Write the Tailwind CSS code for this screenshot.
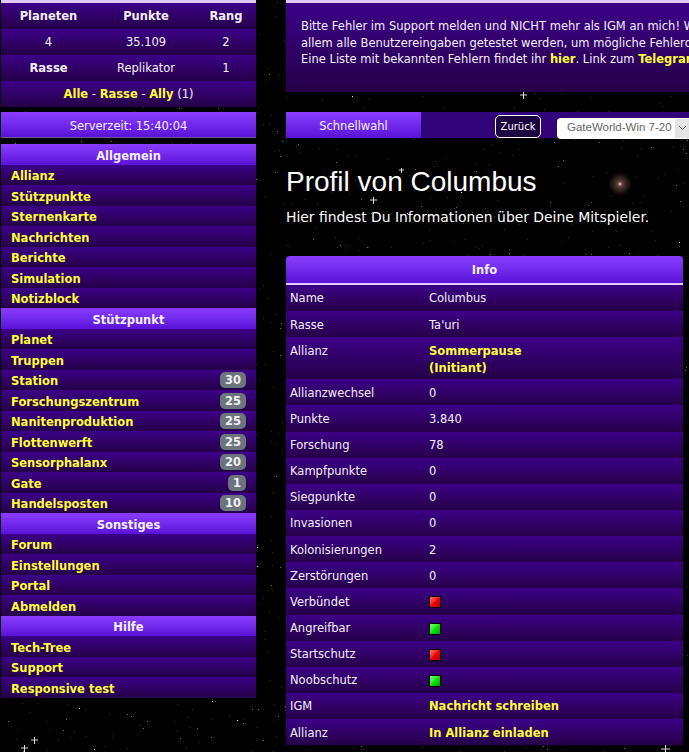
<!DOCTYPE html>
<html lang="de"><head><meta charset="utf-8"><title>Profil</title>
<script src="https://cdn.jsdelivr.net/npm/@tailwindcss/browser@4"></script>
</head>
<body class="relative h-[752px] w-[689px] overflow-hidden bg-black font-['DejaVu_Sans',sans-serif] text-[11.5px] text-[#f2f0f8]">
<svg id="stars" class="absolute inset-0" width="689" height="752" aria-hidden="true">
<defs><radialGradient id="neb"><stop offset="0" stop-color="#ffe8d8"/><stop offset=".2" stop-color="#8a6050" stop-opacity=".7"/><stop offset=".7" stop-color="#4a3028" stop-opacity=".45"/><stop offset="1" stop-color="#302020" stop-opacity="0"/></radialGradient></defs>
<circle cx="620" cy="184" r="12" fill="url(#neb)"/>
<path d="M520 95h7M523.500 92v7M370 200h7M373.500 197v7M399 170h5M401.500 168v5M31 740h7M34.500 737v7M21 748h7M24.500 745v7M661 749h9M665.500 745v7" stroke="#fff" stroke-width="1" opacity=".85"/>
</svg>
<div class="relative flex">
<aside class="ml-px w-[255px] shrink-0">
<div class="border-t-[3px] border-[#e3c8f5] [&>div]:pt-[2px]">
<div class="grid h-[26px] grid-cols-[95px_100px_60px] items-center bg-gradient-to-b from-[#3c0088] to-[#250048] text-center font-bold"><span>Planeten</span><span>Punkte</span><span>Rang</span></div>
<div class="grid h-[26px] grid-cols-[95px_100px_60px] items-center bg-gradient-to-b from-[#3c0088] to-[#250048] text-center"><span>4</span><span>35.109</span><span>2</span></div>
<div class="grid h-[26px] grid-cols-[95px_100px_60px] items-center bg-gradient-to-b from-[#3c0088] to-[#250048] text-center"><span class="font-bold">Rasse</span><span>Replikator</span><span>1</span></div>
<div class="flex h-[26px] items-center justify-center bg-gradient-to-b from-[#3c0088] to-[#250048]"><span><b class="text-[#ffff33]">Alle</b> - <b class="text-[#ffff33]">Rasse</b> - <b class="text-[#ffff33]">Ally</b> (1)</span></div>
</div>
<div class="mt-[5px] flex h-[26px] items-center justify-center border-b border-[#6a5a9a] bg-gradient-to-b from-[#8a3cff] to-[#5a10d8] pt-[4px]">Serverzeit: 15:40:04</div>
<nav class="mt-[6px] font-bold text-[#ffff33] [&>div]:flex [&>div]:h-[20.5px] [&>div]:items-center [&>div]:pt-[4px]">
<div class="justify-center bg-gradient-to-b from-[#8a3cff] to-[#5a10d8] text-[#f4f0ff]">Allgemein</div>
<div class="bg-gradient-to-b from-[#3c0088] to-[#250048] pl-[10px]">Allianz</div>
<div class="bg-gradient-to-b from-[#3c0088] to-[#250048] pl-[10px]">Stützpunkte</div>
<div class="bg-gradient-to-b from-[#3c0088] to-[#250048] pl-[10px]">Sternenkarte</div>
<div class="bg-gradient-to-b from-[#3c0088] to-[#250048] pl-[10px]">Nachrichten</div>
<div class="bg-gradient-to-b from-[#3c0088] to-[#250048] pl-[10px]">Berichte</div>
<div class="bg-gradient-to-b from-[#3c0088] to-[#250048] pl-[10px]">Simulation</div>
<div class="bg-gradient-to-b from-[#3c0088] to-[#250048] pl-[10px]">Notizblock</div>
<div class="justify-center bg-gradient-to-b from-[#8a3cff] to-[#5a10d8] text-[#f4f0ff]">Stützpunkt</div>
<div class="bg-gradient-to-b from-[#3c0088] to-[#250048] pl-[10px]">Planet</div>
<div class="bg-gradient-to-b from-[#3c0088] to-[#250048] pl-[10px]">Truppen</div>
<div class="justify-between bg-gradient-to-b from-[#3c0088] to-[#250048] pl-[10px] pr-[10px]">Station<span class="-mt-[3px] rounded-[5px] bg-[#6c757d] px-[5px] leading-[16px] text-[#f0f0f0]">30</span></div>
<div class="justify-between bg-gradient-to-b from-[#3c0088] to-[#250048] pl-[10px] pr-[10px]">Forschungszentrum<span class="-mt-[3px] rounded-[5px] bg-[#6c757d] px-[5px] leading-[16px] text-[#f0f0f0]">25</span></div>
<div class="justify-between bg-gradient-to-b from-[#3c0088] to-[#250048] pl-[10px] pr-[10px]">Nanitenproduktion<span class="-mt-[3px] rounded-[5px] bg-[#6c757d] px-[5px] leading-[16px] text-[#f0f0f0]">25</span></div>
<div class="justify-between bg-gradient-to-b from-[#3c0088] to-[#250048] pl-[10px] pr-[10px]">Flottenwerft<span class="-mt-[3px] rounded-[5px] bg-[#6c757d] px-[5px] leading-[16px] text-[#f0f0f0]">25</span></div>
<div class="justify-between bg-gradient-to-b from-[#3c0088] to-[#250048] pl-[10px] pr-[10px]">Sensorphalanx<span class="-mt-[3px] rounded-[5px] bg-[#6c757d] px-[5px] leading-[16px] text-[#f0f0f0]">20</span></div>
<div class="justify-between bg-gradient-to-b from-[#3c0088] to-[#250048] pl-[10px] pr-[10px]">Gate<span class="-mt-[3px] rounded-[5px] bg-[#6c757d] px-[5px] leading-[16px] text-[#f0f0f0]">1</span></div>
<div class="justify-between bg-gradient-to-b from-[#3c0088] to-[#250048] pl-[10px] pr-[10px]">Handelsposten<span class="-mt-[3px] rounded-[5px] bg-[#6c757d] px-[5px] leading-[16px] text-[#f0f0f0]">10</span></div>
<div class="justify-center bg-gradient-to-b from-[#8a3cff] to-[#5a10d8] text-[#f4f0ff]">Sonstiges</div>
<div class="bg-gradient-to-b from-[#3c0088] to-[#250048] pl-[10px]">Forum</div>
<div class="bg-gradient-to-b from-[#3c0088] to-[#250048] pl-[10px]">Einstellungen</div>
<div class="bg-gradient-to-b from-[#3c0088] to-[#250048] pl-[10px]">Portal</div>
<div class="bg-gradient-to-b from-[#3c0088] to-[#250048] pl-[10px]">Abmelden</div>
<div class="justify-center bg-gradient-to-b from-[#8a3cff] to-[#5a10d8] text-[#f4f0ff]">Hilfe</div>
<div class="bg-gradient-to-b from-[#3c0088] to-[#250048] pl-[10px]">Tech-Tree</div>
<div class="bg-gradient-to-b from-[#3c0088] to-[#250048] pl-[10px]">Support</div>
<div class="bg-gradient-to-b from-[#3c0088] to-[#250048] pl-[10px]">Responsive test</div>
</nav>
</aside>
<main class="ml-[30px] w-[397px] shrink-0">
<section class="h-[92px] w-[420px] border-t-[3px] border-[#e3c8f5] bg-gradient-to-b from-[#3c0088] to-[#250048] pl-[15px] pt-[15px] text-[11.5px] leading-[16.5px] whitespace-nowrap">
<p>Bitte Fehler im Support melden und NICHT mehr als IGM an mich! Wir</p>
<p>allem alle Benutzereingaben getestet werden, um mögliche Fehlerquellen</p>
<p>Eine Liste mit bekannten Fehlern findet ihr <b class="text-[#ffff33]">hier</b>. Link zum <b class="text-[#ffff33]">Telegram</b></p>
</section>
<div class="mt-[20px] flex h-[26px] w-[430px] items-center bg-[#32047a]">
<div class="flex h-[26px] w-[135px] shrink-0 items-center justify-center bg-gradient-to-b from-[#8a3cff] to-[#5a10d8] pt-[4px]">Schnellwahl</div>
<button class="ml-[74px] mt-[3px] h-[23px] w-[46px] shrink-0 rounded-[5px] border border-white bg-[#1c0440] text-center text-[10px] text-white">Zurück</button>
<div class="ml-[16px] mt-[6px] flex h-[21px] w-[150px] shrink-0 items-center justify-between rounded-[4px] bg-white pl-[10px] font-['Liberation_Sans',sans-serif] text-[11.5px] whitespace-nowrap text-[#666]">GateWorld-Win 7-20<span class="mr-[17px] flex h-[19px] w-[15px] items-center justify-center bg-[#e4e4e4]"><svg width="9" height="6" viewBox="0 0 9 6"><path d="M1 1l3.500 3.500L8 1" fill="none" stroke="#555"/></svg></span></div>
</div>
<h1 class="mt-[28px] font-['Liberation_Sans',sans-serif] text-[28px] leading-[32px] text-white">Profil von Columbus</h1>
<p class="mt-[10px] text-[13.9px] leading-[18px] whitespace-nowrap text-white">Hier findest Du Informationen über Deine Mitspieler.</p>
<section class="mt-[30px]">
<h2 class="flex h-[27px] items-center justify-center rounded-t-[4px] bg-gradient-to-b from-[#8a3cff] to-[#5a10d8] pt-[2px] font-bold">Info</h2>
<div class="h-[2px] bg-[#e3c8f5]"></div>
<div class="[&>div]:grid [&>div]:h-[26.15px] [&>div]:grid-cols-[139px_1fr] [&>div]:items-center [&>div]:bg-gradient-to-b [&>div]:from-[#3c0088] [&>div]:to-[#250048] [&>div]:pl-[4px] [&>div]:pt-[2px]">
<div><span>Name</span><span>Columbus</span></div>
<div><span>Rasse</span><span>Ta'uri</span></div>
<div class="!h-[42px] !items-start !pt-[6px] leading-[16.5px]"><span>Allianz</span><b class="text-[#ffff33]">Sommerpause<br>(Initiant)</b></div>
<div><span>Allianzwechsel</span><span>0</span></div>
<div><span>Punkte</span><span>3.840</span></div>
<div><span>Forschung</span><span>78</span></div>
<div><span>Kampfpunkte</span><span>0</span></div>
<div><span>Siegpunkte</span><span>0</span></div>
<div><span>Invasionen</span><span>0</span></div>
<div><span>Kolonisierungen</span><span>2</span></div>
<div><span>Zerstörungen</span><span>0</span></div>
<div><span>Verbündet</span><i class="block h-[12px] w-[12px] border border-black bg-gradient-to-br from-[#ff6a6a] via-[#f00000] to-[#b00000]"></i></div>
<div><span>Angreifbar</span><i class="block h-[12px] w-[12px] border border-black bg-gradient-to-br from-[#70ff70] via-[#00e800] to-[#00a000]"></i></div>
<div><span>Startschutz</span><i class="block h-[12px] w-[12px] border border-black bg-gradient-to-br from-[#ff6a6a] via-[#f00000] to-[#b00000]"></i></div>
<div><span>Noobschutz</span><i class="block h-[12px] w-[12px] border border-black bg-gradient-to-br from-[#70ff70] via-[#00e800] to-[#00a000]"></i></div>
<div><span>IGM</span><b class="text-[#ffff33]">Nachricht schreiben</b></div>
<div><span>Allianz</span><b class="text-[#ffff33]">In Allianz einladen</b></div>
</div>
</section>
</main>
</div>
<script>
var s=document.getElementById('stars'),x=12345,h='';
function r(){x=(x*1103515245+12345)&2147483647;return x/2147483647}
for(var i=0;i<1800;i++){var b=r();h+='<rect x="'+Math.floor(r()*689)+'" y="'+Math.floor(r()*752)+'" width="1" height="1" fill="#fff" opacity="'+(b>.95?.95:b>.75?.45:.2)+'"/>'}
s.insertAdjacentHTML('beforeend',h);
</script>
</body></html>
